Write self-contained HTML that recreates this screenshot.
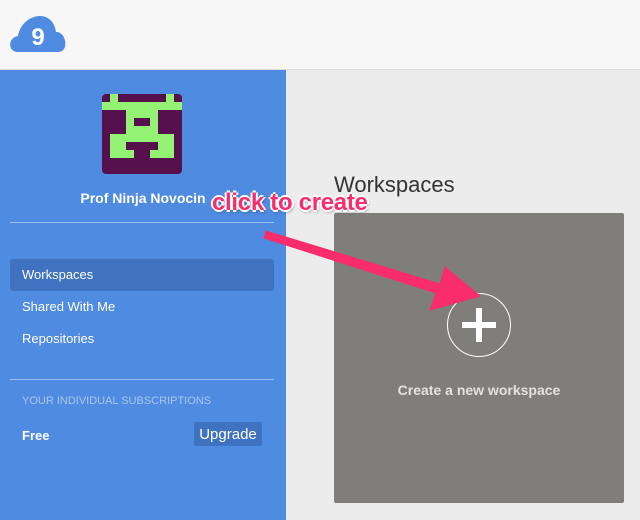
<!DOCTYPE html>
<html><head><style>
*{margin:0;padding:0;box-sizing:border-box}
body{width:640px;height:520px;overflow:hidden;background:#ececec;font-family:"Liberation Sans",sans-serif;position:relative}
.hdr{position:absolute;left:0;top:0;width:640px;height:70px;background:#f7f7f7;border-bottom:1px solid #ddd}
.side{position:absolute;left:0;top:70px;width:286px;height:450px;background:#4f8be0}
.t{position:absolute;color:#fff;white-space:nowrap}
.line{position:absolute;left:10px;width:264px;height:1px;background:#9dbdf0}
</style></head><body>
<div class="hdr">
<svg width="70" height="60" style="position:absolute;left:0;top:0">
<path d="M18 52 C8 52 7 38 18 36 C20 24 30 16 40 16 C50 16 55 24 56 32 C66 31 70 52 58 52 Z" fill="#4f8be0"/>
<text x="38" y="45" font-family="Liberation Sans" font-weight="bold" font-size="24" fill="#fff" text-anchor="middle">9</text>
</svg>
</div>
<div class="side"></div>
<svg width="80" height="80" style="position:absolute;left:102px;top:94px">
<rect width="80" height="80" rx="4" fill="#56104d"/>
<g fill="#94f374">
<rect x="8" y="0" width="8" height="8"/><rect x="64" y="0" width="8" height="8"/>
<rect x="0" y="8" width="80" height="8"/>
<rect x="24" y="16" width="32" height="24"/>
<rect x="8" y="40" width="64" height="8"/>
<rect x="8" y="48" width="16" height="16"/><rect x="56" y="48" width="16" height="16"/>
<rect x="24" y="56" width="8" height="8"/><rect x="48" y="56" width="8" height="8"/>
</g>
<g fill="#56104d"><rect x="32" y="24" width="16" height="8"/><rect x="24" y="48" width="32" height="8"/><rect x="32" y="56" width="16" height="8"/></g>
</svg>
<div class="t" style="left:0;width:286px;text-align:center;top:190px;font-size:14px;font-weight:bold">Prof Ninja Novocin</div>
<div class="line" style="top:222px"></div>
<div style="position:absolute;left:10px;top:259px;width:264px;height:32px;background:#3f72c0;border-radius:3px"></div>
<div class="t" style="left:22px;top:267px;font-size:13px">Workspaces</div>
<div class="t" style="left:22px;top:299px;font-size:13px">Shared With Me</div>
<div class="t" style="left:22px;top:331px;font-size:13px">Repositories</div>
<div class="line" style="top:379px"></div>
<div class="t" style="left:22px;top:395px;font-size:11px;color:#a9c6f0">YOUR INDIVIDUAL SUBSCRIPTIONS</div>
<div class="t" style="left:22px;top:428px;font-size:13px;font-weight:bold">Free</div>
<div style="position:absolute;left:194px;top:422px;width:68px;height:24px;background:#3f72c0;border-radius:2px"></div>
<div class="t" style="left:194px;width:68px;text-align:center;top:426px;font-size:15px">Upgrade</div>
<div class="t" style="left:334px;top:172px;font-size:22px;color:#333">Workspaces</div>
<div style="position:absolute;left:334px;top:213px;width:290px;height:290px;background:#807e7b;border-radius:2px"></div>
<svg width="640" height="520" style="position:absolute;left:0;top:0">
<circle cx="479" cy="325" r="31.5" fill="none" stroke="#fff" stroke-width="1"/>
<rect x="462" y="322" width="34" height="6" fill="#fff"/><rect x="476" y="308" width="6" height="34" fill="#fff"/>
<path d="M266 231 L440 284 L445 267 L480 296 L430 310 L436 293 L264 238 Z" fill="#f92d6b" stroke="#f92d6b" stroke-width="1" stroke-linejoin="round"/>
</svg>
<div class="t" style="left:334px;width:290px;text-align:center;top:382px;font-size:14px;font-weight:bold;color:#e2e2e2">Create a new workspace</div>
<div class="t" style="left:212px;top:189px;font-size:24px;letter-spacing:-0.3px;font-weight:bold;color:#f92d6b;text-shadow:-2px 0 #fff,2px 0 #fff,0 -2px #fff,0 2px #fff,1px 2px 3px rgba(0,0,0,.4)">click to create</div>
</body></html>
